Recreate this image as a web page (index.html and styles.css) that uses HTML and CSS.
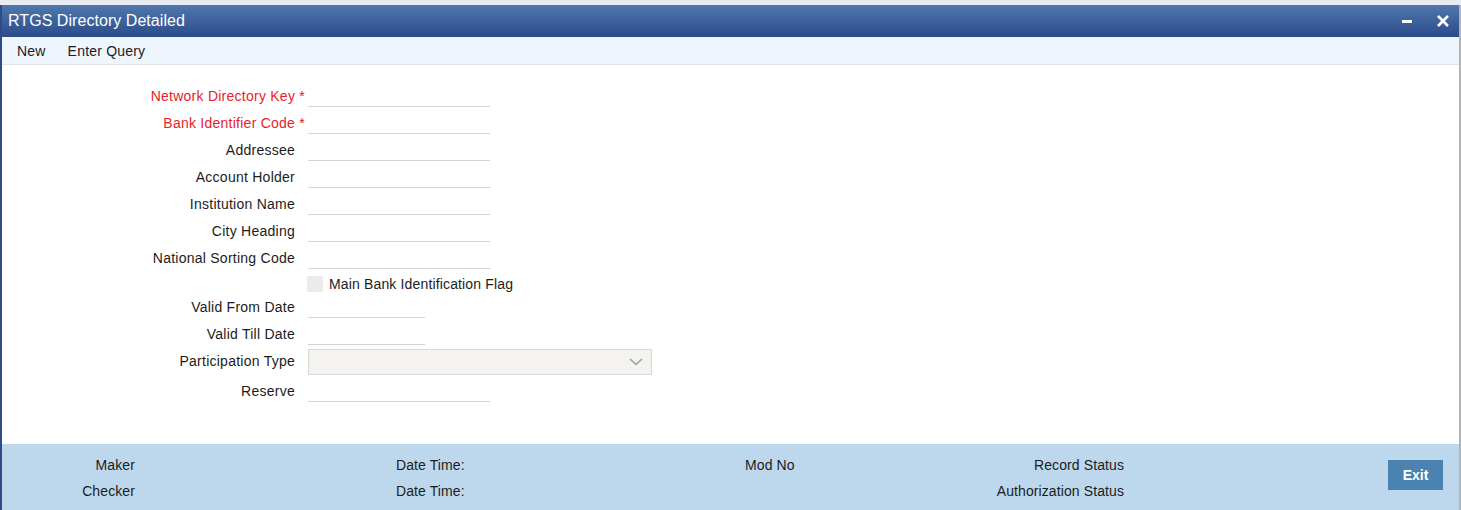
FILE: index.html
```html
<!DOCTYPE html>
<html lang="en">

<head>
    <meta charset="UTF-8">
    <meta name="viewport" content="width=device-width, initial-scale=1.0">
    <title>RTGS Directory Detailed</title>
    <link rel="stylesheet" href="styles.css">
</head>

<body>
    <div class="window">
        <div class="header">
            <span class="title">RTGS Directory Detailed</span>
            <div class="win-btns">
                <svg width="12" height="12" viewBox="0 0 12 12"><rect x="1" y="5" width="10" height="3" fill="#fff" /></svg>
                <svg width="14" height="14" viewBox="0 0 14 14"><path d="M2 2 L12 12 M12 2 L2 12" stroke="#fff" stroke-width="2.6" /></svg>
            </div>
        </div>
        <div class="toolbar">
            <span>New</span>
            <span>Enter Query</span>
        </div>

        <div class="form">
            <div class="row">
                <label class="req">Network Directory Key <b>*</b></label>
                <input type="text" class="field">
            </div>
            <div class="row">
                <label class="req">Bank Identifier Code <b>*</b></label>
                <input type="text" class="field">
            </div>
            <div class="row">
                <label>Addressee</label>
                <input type="text" class="field">
            </div>
            <div class="row">
                <label>Account Holder</label>
                <input type="text" class="field">
            </div>
            <div class="row">
                <label>Institution Name</label>
                <input type="text" class="field">
            </div>
            <div class="row">
                <label>City Heading</label>
                <input type="text" class="field">
            </div>
            <div class="row">
                <label>National Sorting Code</label>
                <input type="text" class="field">
            </div>
            <div class="row check-row">
                <label></label>
                <div class="check">
                    <span class="box"></span>
                    <span>Main Bank Identification Flag</span>
                </div>
            </div>
            <div class="row">
                <label>Valid From Date</label>
                <input type="text" class="field short">
            </div>
            <div class="row">
                <label>Valid Till Date</label>
                <input type="text" class="field short">
            </div>
            <div class="row select-row">
                <label>Participation Type</label>
                <div class="select">
                    <svg width="14" height="8" viewBox="0 0 14 8"><path d="M1 1 L7 6.5 L13 1" fill="none" stroke="#9aa0a6" stroke-width="1.6" /></svg>
                </div>
            </div>
            <div class="row">
                <label>Reserve</label>
                <input type="text" class="field">
            </div>
        </div>

        <div class="footer">
            <span class="r">Maker</span>
            <span></span>
            <span>Date Time:</span>
            <span>Mod No</span>
            <span class="r">Record Status</span>
            <span></span>
            <button class="exit">Exit</button>

            <span class="r">Checker</span>
            <span></span>
            <span>Date Time:</span>
            <span></span>
            <span class="r">Authorization Status</span>
            <span></span>
        </div>
    </div>
</body>

</html>
```

FILE: styles.css
```css
body {
    margin: 0;
    padding-top: 5px;
    background-color: #e8ecf2;
    font-family: "Liberation Sans", Arial, sans-serif;
    font-size: 14px;
    letter-spacing: 0.2px;
    color: #1c1c1c;
    overflow: hidden;
}

.window {
    width: 1457px;
    height: 505px;
    border-left: 2px solid #2c4b88;
    background-color: #fff;
    display: flex;
    flex-direction: column;
    box-shadow: 2px 0 0 #b4b4b4;
}

.header {
    height: 32px;
    background: linear-gradient(#5077ae, #2b4c8a);
    display: flex;
    align-items: center;
    justify-content: space-between;
    padding: 0 9px 0 6px;
    color: #fff;
}

.title {
    font-size: 16px;
    letter-spacing: 0.05px;
}

.win-btns {
    display: flex;
    align-items: center;
    gap: 23px;
}

.toolbar {
    height: 27px;
    background-color: #eef5fd;
    border-bottom: 1px solid #dfe4ea;
    display: flex;
    align-items: center;
    gap: 22px;
    padding-left: 15px;
}

.form {
    flex: 1;
    padding-top: 19px;
    display: flex;
    flex-direction: column;
    gap: 4px;
    letter-spacing: 0.25px;
}

.row {
    display: flex;
    align-items: flex-end;
    height: 23px;
}

.row label {
    align-self: flex-start;
    width: 293px;
    text-align: right;
    padding-right: 13px;
    line-height: 25px;
    white-space: nowrap;
}

.row label.req {
    color: #e8222c;
    padding-right: 3px;
    width: 303px;
}

.row label.req b {
    font-weight: normal;
    color: #d61a1a;
}

.field {
    width: 182px;
    height: 22px;
    border: none;
    border-bottom: 1px solid #d4d4d4;
    padding: 0;
    margin: 0;
    outline: none;
    font: inherit;
}

.field.short {
    width: 117px;
}

.check-row {
    height: 18px;
    align-items: center;
}

.check-row label {
    line-height: 18px;
}

.check {
    display: flex;
    align-items: center;
    gap: 6px;
    margin-top: 4px;
    margin-left: -1px;
    letter-spacing: 0.15px;
}

.box {
    width: 16px;
    height: 16px;
    background-color: #ebebeb;
}

.select-row {
    height: 26px;
    align-items: center;
}

.select {
    width: 344px;
    height: 26px;
    background-color: #f4f3f0;
    border: 1px solid #d9d9d9;
    display: flex;
    align-items: center;
    justify-content: flex-end;
    padding-right: 8px;
    box-sizing: border-box;
}

.footer {
    height: 66px;
    box-sizing: border-box;
    background-color: #bdd8ec;
    padding-top: 8px;
    display: grid;
    grid-template-columns: 133px 261px 349px 155px 224px 264px 55px;
    grid-template-rows: 26px 26px;
    align-items: center;
    letter-spacing: 0.1px;
}

.footer .r {
    text-align: right;
}

.exit {
    grid-row: 1 / span 2;
    grid-column: 7;
    align-self: start;
    margin-top: 8px;
    width: 55px;
    height: 30px;
    background-color: #4a83b1;
    border: none;
    color: #fff;
    font-weight: bold;
    font-family: inherit;
    font-size: 14px;
}
```
